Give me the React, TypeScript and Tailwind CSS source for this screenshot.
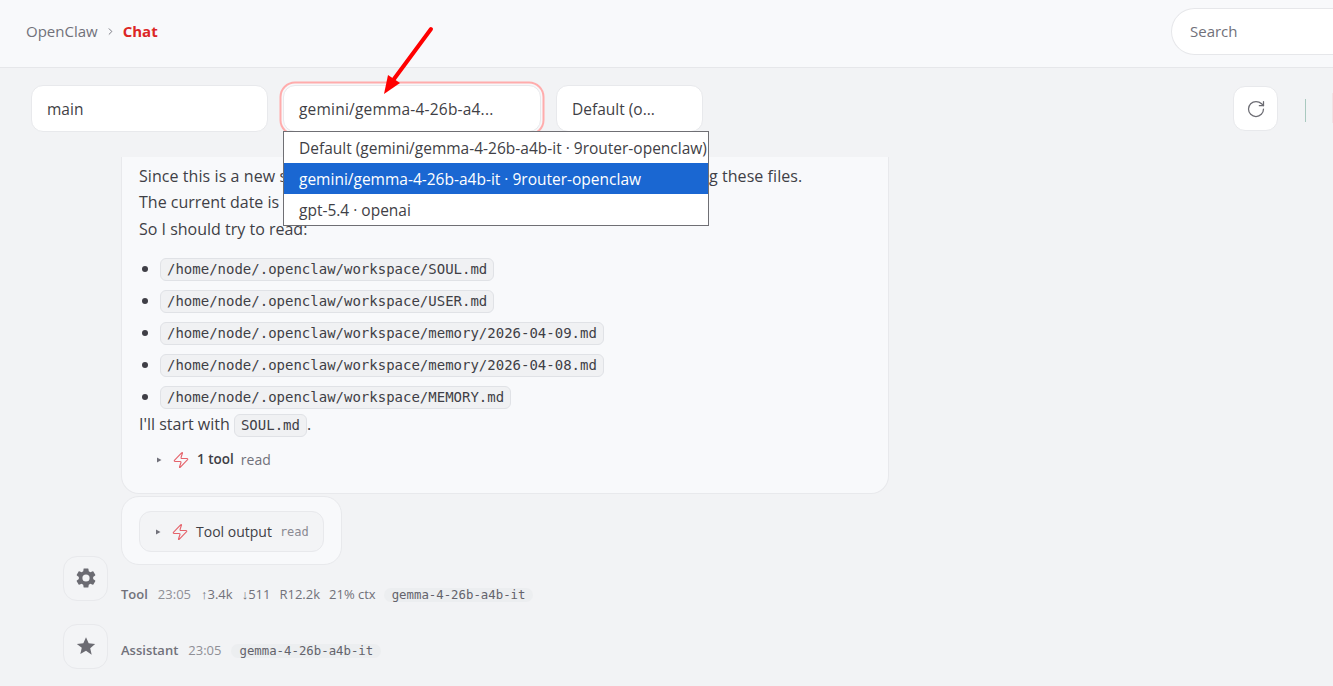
import { ChevronRight, RotateCw, Zap } from "lucide-react";

const sans = "font-['Open_Sans','Noto_Sans',sans-serif]";
const mono = "font-['DejaVu_Sans_Mono','Liberation_Mono',monospace]";

const paths = [
	"/home/node/.openclaw/workspace/SOUL.md",
	"/home/node/.openclaw/workspace/USER.md",
	"/home/node/.openclaw/workspace/memory/2026-04-09.md",
	"/home/node/.openclaw/workspace/memory/2026-04-08.md",
	"/home/node/.openclaw/workspace/MEMORY.md",
];

const options = [
	"Default (gemini/gemma-4-26b-a4b-it · 9router-openclaw)",
	"gemini/gemma-4-26b-a4b-it · 9router-openclaw",
	"gpt-5.4 · openai",
];

function Code({ children }: { children: string }) {
	return (
		<code className={`${mono} inline-block h-[23px] rounded-md border border-[#e0e2e6] bg-[#f0f1f3] px-[6px] text-sm leading-[21px] text-[#3f3f46]`}>
			{children}
		</code>
	);
}

function Select({ label, className }: { label: string; className: string }) {
	return (
		<div className={`flex h-[47px] shrink-0 items-center rounded-xl border border-[#e8e9ec] bg-white pl-[15px] pt-[2px] text-[15.5px] text-[#3f3f46] ${className}`}>
			{label}
		</div>
	);
}

function Caret() {
	return (
		<svg width="6" height="6" viewBox="0 0 6 6" className="shrink-0">
			<path d="M1 0.5 L5.5 3 L1 5.5 Z" fill="#71717a" />
		</svg>
	);
}

function Avatar({ children }: { children: React.ReactNode }) {
	return (
		<div className="flex h-[45px] w-[45px] shrink-0 items-center justify-center rounded-[14px] border border-[#e8e9ec] bg-[#f3f4f6]">
			{children}
		</div>
	);
}

function ModelTag() {
	return (
		<span className={`${mono} rounded-full bg-[#eceef0] px-2 text-[12.35px] leading-[16px] text-[#63636b]`}>
			gemma-4-26b-a4b-it
		</span>
	);
}

export default function App() {
	return (
		<div className={`${sans} relative flex h-[686px] w-[1333px] flex-col overflow-hidden bg-[#f2f3f5]`}>
			{/* Header */}
			<header className="flex h-[68px] shrink-0 items-center justify-between border-b border-[#e6e7ea] bg-[#f8f9fb] pb-[5px] pl-[26px]">
				<div className="flex items-center text-[15px]">
					<span className="text-[#71717a]">OpenClaw</span>
					<ChevronRight className="mx-[7px] h-[11px] w-[11px] text-[#71717a]" />
					<span className="font-bold text-[#dc2626]">Chat</span>
				</div>
				<div className="flex h-[47px] w-[162px] items-center rounded-l-full border border-r-0 border-[#e6e7ea] bg-white pl-[18px] text-[15px] text-[#71717a]">
					Search
				</div>
			</header>

			{/* Controls */}
			<div className="flex h-[89px] shrink-0 items-start pl-[31px] pt-[17px]">
				<Select label="main" className="w-[237px]" />
				<Select label="gemini/gemma-4-26b-a4..." className="ml-[15px] w-[258px] tracking-[0.2px] shadow-[0_0_0_1.5px_#f8f8fa,0_0_0_3.5px_#ffacac]" />
				<Select label="Default (o..." className="ml-[15px] w-[147px]" />
				<div className="ml-[530px] mt-px flex h-[45px] w-[45px] shrink-0 items-center justify-center rounded-xl border border-[#e8e9ec] bg-white">
					<RotateCw className="h-5 w-5 text-[#6b6b72]" strokeWidth={1.5} />
				</div>
				<div className="ml-[27px] mt-[14px] h-[23px] w-px shrink-0 bg-[#a9c9bf]" />
				<div className="ml-[26px] mt-[8px] h-[30px] w-px shrink-0 bg-[#f0e4e6]" />
			</div>

			{/* Messages */}
			<main className="flex-1 overflow-hidden pl-[63px]">
				<div className="ml-[58px] w-[768px] rounded-b-[18px] border border-t-0 border-[#e8e9ec] bg-[#f8f9fb] pb-[23px] pl-[17px] pr-4 text-base text-[#3f3f46]">
					<p className="pt-[6px] leading-[26.5px] tracking-[0.07px] whitespace-nowrap">
						Since this is a new session, I should follow the startup instructions by reading these files.
					</p>
					<p className="-mt-px leading-[26.5px]">The current date is 2026-04-09.</p>
					<p className="mt-px leading-[26.5px]">So I should try to read:</p>
					<ul className="mt-[14px] list-disc pl-[21px]">
						{paths.map((p) => (
							<li key={p} className="mb-[9px] h-[23px] leading-[23px] marker:text-[#3f3f46]">
								<Code>{p}</Code>
							</li>
						))}
					</ul>
					<p className="-mt-[6px] h-[26px] leading-[26px]">
						I'll start with <Code>SOUL.md</Code>.
					</p>
					<div className="mt-[13px] flex items-center pl-[17px] text-sm">
						<Caret />
						<Zap className="ml-[10px] h-[18px] w-[18px] text-[#e5636b]" strokeWidth={1.5} />
						<span className="ml-[7px] text-[13.5px] font-semibold text-[#3f3f46]">1 tool</span>
						<span className="ml-[7px] text-[#71717a]">read</span>
					</div>
				</div>

				<div className="ml-[58px] mt-[2px] flex h-[69px] w-[221px] items-center justify-center rounded-[18px] border border-[#e8e9ec] bg-[#f8f9fb] pt-[2px]">
					<div className="flex h-[41px] w-[185px] items-center rounded-xl border border-[#e8e9ec] bg-[#f3f4f6] pl-[15px] pt-[2px]">
						<Caret />
						<Zap className="ml-[10px] h-[18px] w-[18px] text-[#e5636b]" strokeWidth={1.5} />
						<span className="ml-[7px] text-sm font-medium text-[#3f3f46]">Tool output</span>
						<span className={`${mono} ml-2 text-xs text-[#8a8a92]`}>read</span>
					</div>
				</div>

				<div className="-mt-[9px] flex">
					<Avatar>
						<svg width="24" height="24" viewBox="0 0 24 24" fill="#6b6b72">
							<path d="M19.14 12.94c.04-.3.06-.61.06-.94 0-.32-.02-.64-.07-.94l2.03-1.58a.49.49 0 0 0 .12-.61l-1.92-3.32a.488.488 0 0 0-.59-.22l-2.39.96c-.5-.38-1.03-.7-1.62-.94l-.36-2.54a.484.484 0 0 0-.48-.41h-3.84c-.24 0-.43.17-.47.41l-.36 2.54c-.59.24-1.13.57-1.62.94l-2.39-.96c-.22-.08-.47 0-.59.22L2.74 8.87c-.12.21-.08.47.12.61l2.03 1.58c-.05.3-.09.63-.09.94s.02.64.07.94l-2.03 1.58a.49.49 0 0 0-.12.61l1.92 3.32c.12.22.37.29.59.22l2.39-.96c.5.38 1.03.7 1.62.94l.36 2.54c.05.24.24.41.48.41h3.84c.24 0 .44-.17.47-.41l.36-2.54c.59-.24 1.13-.56 1.62-.94l2.39.96c.22.08.47 0 .59-.22l1.92-3.32c.12-.22.07-.47-.12-.61l-2.01-1.58zM12 15.6A3.6 3.6 0 1 1 12 8.4a3.6 3.6 0 0 1 0 7.2z" />
						</svg>
					</Avatar>
					<div className="ml-[13px] mt-[30px] flex h-[18px] items-center text-[13px] text-[#71717a]">
						<span className="font-semibold">Tool</span>
						<span className="ml-[10px] text-[#8f8f96]">23:05</span>
						<span className="ml-[10px]">↑3.4k</span>
						<span className="ml-[9px]">↓511</span>
						<span className="ml-[9px]">R12.2k</span>
						<span className="ml-[9px]">21% ctx</span>
						<span className="ml-[8px]"><ModelTag /></span>
					</div>
				</div>

				<div className="mt-[20px] flex">
					<Avatar>
						<svg width="22" height="22" viewBox="0 0 24 24" fill="#6b6b72">
							<path d="M12 2.5l2.9 6.6 7.1.7-5.4 4.7 1.6 7L12 17.2l-6.2 3.6 1.6-7L2 9.8l7.1-.7z" />
						</svg>
					</Avatar>
					<div className="ml-[13px] mt-[18px] flex h-[18px] items-center text-[13px] text-[#71717a]">
						<span className="font-semibold">Assistant</span>
						<span className="ml-[10px] text-[#8f8f96]">23:05</span>
						<span className="ml-[10px]"><ModelTag /></span>
					</div>
				</div>
			</main>

			{/* Open select menu */}
			<div className="absolute left-[283px] top-[131px] w-[426px] border border-[#6f6f74] bg-white text-[15.5px] text-[#3f3f46]">
				{options.map((opt, i) => (
					<div key={opt} className={`h-[31px] whitespace-nowrap pl-[15px] leading-[32px] ${i === 1 ? "bg-[#1a67d2] text-white" : ""}`}>
						{opt}
					</div>
				))}
			</div>

			{/* Annotation arrow */}
			<svg className="absolute left-[380px] top-[22px]" width="60" height="80" viewBox="0 0 60 80">
				<path d="M51 7 L14 57" stroke="#ff0000" strokeWidth="4" strokeLinecap="round" />
				<path d="M4 72 L8 53 L20 61 Z" fill="#ff0000" />
			</svg>
		</div>
	);
}
